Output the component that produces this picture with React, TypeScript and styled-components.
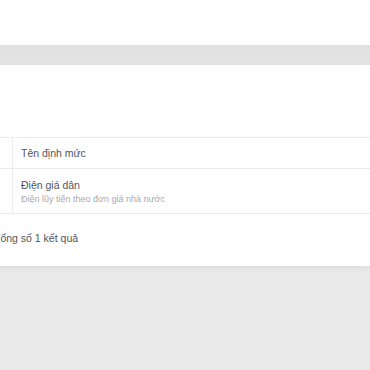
import React from 'react';
import styled, { createGlobalStyle } from 'styled-components';

const GlobalStyle = createGlobalStyle`
  html, body {
    margin: 0;
    padding: 0;
    background: #e9e9e9;
    font-family: "Liberation Sans", Arial, sans-serif;
    overflow: hidden;
  }
`;

const Page = styled.div`
  display: flex;
  flex-direction: column;
  width: 370px;
  height: 370px;
  background: #e9e9e9;
`;

const TopBar = styled.div`
  height: 45px;
  background: #ffffff;
`;

const Band = styled.div`
  height: 20px;
  background: linear-gradient(#dfdfdf, #e4e4e4);
`;

const Card = styled.div`
  display: flex;
  flex-direction: column;
  height: 201px;
  margin-left: -26px;
  background: #ffffff;
  box-shadow: 0 2px 6px rgba(0, 0, 0, 0.06);
  padding-top: 72px;
  box-sizing: border-box;
`;

const Table = styled.div`
  display: flex;
  flex-direction: column;
  border-top: 1px solid #ececf0;
`;

const Row = styled.div<{ $height: number }>`
  display: grid;
  grid-template-columns: 38px 1fr;
  height: ${p => p.$height}px;
  border-bottom: 1px solid #ececf0;
  box-sizing: border-box;
`;

const Cell = styled.div`
  display: flex;
  flex-direction: column;
  justify-content: center;
  padding-left: 8px;
  & + & {
    border-left: 1px solid #ececf0;
  }
`;

const Title = styled.span`
  font-size: 10.5px;
  color: #51535c;
  line-height: 14px;
`;

const Sub = styled.span`
  font-size: 9px;
  color: #a8aab0;
  line-height: 12px;
  margin-top: 1px;
`;

const Footer = styled.div`
  padding: 18px 0 0 20px;
  font-size: 10.5px;
  color: #51535c;
`;

const App = () => {
  return (
    <Page>
      <GlobalStyle />
      <TopBar />
      <Band />
      <Card>
        <Table>
          <Row $height={31}>
            <Cell />
            <Cell>
              <Title>Tên định mức</Title>
            </Cell>
          </Row>
          <Row $height={45}>
            <Cell />
            <Cell>
              <Title>Điện giá dân</Title>
              <Sub>Điện lũy tiến theo đơn giá nhà nước</Sub>
            </Cell>
          </Row>
        </Table>
        <Footer>Tổng số 1 kết quả</Footer>
      </Card>
    </Page>
  );
};

export default App;
